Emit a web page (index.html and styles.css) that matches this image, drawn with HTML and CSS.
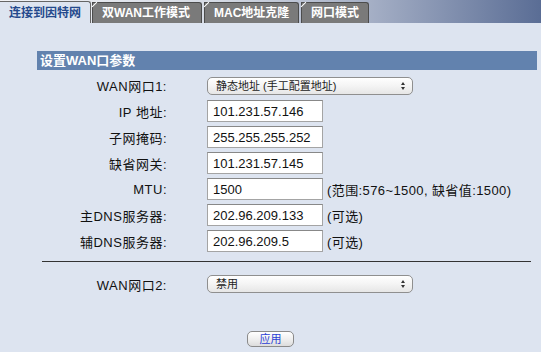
FILE: index.html
```html
<!DOCTYPE html>
<html lang="zh-CN">
<head>
    <meta charset="UTF-8">
    <meta name="viewport" content="width=device-width, initial-scale=1.0">
    <title>连接到因特网</title>
    <link rel="stylesheet" href="styles.css">
</head>
<body>

<div class="tabs">
    <div class="tab active">连接到因特网</div>
    <div class="tab tab-dual">双WAN工作模式</div>
    <div class="tab tab-mac">MAC地址克隆</div>
    <div class="tab tab-port">网口模式</div>
</div>

<div class="panel">
    <div class="section-title">设置WAN口参数</div>

    <div class="form">
        <div class="row row-first">
            <label class="label">WAN网口1:</label>
            <span class="select"><select><option>静态地址 (手工配置地址)</option></select></span>
        </div>
        <div class="row">
            <label class="label">IP 地址:</label>
            <input type="text" value="101.231.57.146">
        </div>
        <div class="row">
            <label class="label">子网掩码:</label>
            <input type="text" value="255.255.255.252">
        </div>
        <div class="row">
            <label class="label">缺省网关:</label>
            <input type="text" value="101.231.57.145">
        </div>
        <div class="row">
            <label class="label">MTU:</label>
            <input type="text" value="1500">
            <span class="hint">(范围:576~1500, 缺省值:1500)</span>
        </div>
        <div class="row">
            <label class="label">主DNS服务器:</label>
            <input type="text" value="202.96.209.133">
            <span class="hint">(可选)</span>
        </div>
        <div class="row">
            <label class="label">辅DNS服务器:</label>
            <input type="text" value="202.96.209.5">
            <span class="hint">(可选)</span>
        </div>
    </div>

    <hr class="divider">

    <div class="row row-wan2">
        <label class="label">WAN网口2:</label>
        <span class="select"><select><option>禁用</option></select></span>
    </div>
</div>

<div class="actions">
    <button class="btn">应用</button>
</div>

</body>
</html>
```

FILE: styles.css
```css
body {
    margin: 0;
    background-color: #dde4f0; /* svetlo plava pozadina */
    font-family: "Liberation Sans", "Noto Sans CJK SC", sans-serif;
    font-size: 13px;
    color: #111;
}
.tabs {
    display: flex;
    align-items: flex-end;
    height: 23px;
    background: linear-gradient(to right, #f2f3f6 0%, #d5dae4 40%, #a6b0c6 68%, #5a6d95 100%);
}
.tab {
    position: relative;
    box-sizing: border-box;
    height: 21px;
    line-height: 20px;
    padding-left: 9px;
    font-size: 12px;
    font-weight: bold;
    color: #fff;
    background-color: #7a7a7a;
    border: 1px solid #4c4c4c;
    border-bottom: none;
    border-top-right-radius: 3px;
    margin-right: 2px;
}
.tab::before {
    content: "";
    position: absolute;
    left: 1px;
    top: -2px;
    width: 1px;
    height: 7px;
    background-color: #fff;
    transform: rotate(45deg);
}
.tab.active {
    width: 91px;
    height: 22px;
    line-height: 22px;
    color: #24498c;
    background-color: #dde4f0;
    border-color: #666;
    border-left: none;
    margin-right: 1px;
}
.tab.active::before {
    display: none;
}
.tab-dual {
    width: 110px;
}
.tab-mac {
    width: 95px;
}
.tab-port {
    width: 68px;
}
.panel {
    padding: 28px 4px 0 37px;
}
.section-title {
    height: 19px;
    line-height: 19px;
    padding-left: 3px;
    background-color: #6282ae;
    color: #fff;
    font-weight: bold;
    font-size: 13px;
}
.form {
    display: flex;
    flex-direction: column;
    gap: 4px;
    padding-top: 5px;
}
.row {
    display: flex;
    align-items: center;
    height: 22px;
}
.row-first {
    height: 21px;
}
.label {
    width: 130px;
    text-align: right;
    margin-right: 40px;
    letter-spacing: 0.5px;
}
input {
    box-sizing: border-box;
    width: 116px;
    height: 22px;
    margin: 0;
    padding: 0 5px;
    border: 1px solid #a4a4a4;
    border-top-color: #888;
    background-color: #fff;
    font-family: "Liberation Sans", sans-serif;
    font-size: 13px;
    color: #111;
}
.hint {
    margin-left: 4px;
    letter-spacing: 0.4px;
}
.select {
    position: relative;
    display: inline-block;
}
.select select {
    appearance: none;
    -webkit-appearance: none;
    box-sizing: border-box;
    width: 206px;
    height: 18px;
    margin: 0;
    padding: 0 0 0 8px;
    border: 1px solid #8f8f8f;
    border-radius: 5px;
    background: linear-gradient(to bottom, #fff 0%, #f4f4f4 50%, #e6e6e6 100%);
    font-family: "Liberation Sans", "Noto Sans CJK SC", sans-serif;
    font-size: 11px;
    color: #222;
}
.select::after {
    content: "";
    position: absolute;
    right: 8px;
    top: 5px;
    width: 0;
    height: 0;
    border-left: 2px solid transparent;
    border-right: 2px solid transparent;
    border-bottom: 3px solid #333;
}
.select::before {
    content: "";
    position: absolute;
    right: 8px;
    top: 10px;
    width: 0;
    height: 0;
    border-left: 2px solid transparent;
    border-right: 2px solid transparent;
    border-top: 3px solid #333;
}
.divider {
    border: none;
    border-top: 1px solid #333;
    margin: 9px 6px 0 5px;
}
.row-wan2 {
    margin-top: 11px;
}
.actions {
    text-align: center;
    margin-top: 36px;
}
.btn {
    box-sizing: border-box;
    width: 47px;
    height: 16px;
    padding: 0;
    border: 1px solid #8a8a8a;
    border-radius: 5px;
    background: linear-gradient(to bottom, #fff 0%, #eee 55%, #dcdcdc 100%);
    font-family: "Liberation Sans", "Noto Sans CJK SC", sans-serif;
    font-size: 11px;
    line-height: 14px;
    color: #2b3fd6;
}
```
